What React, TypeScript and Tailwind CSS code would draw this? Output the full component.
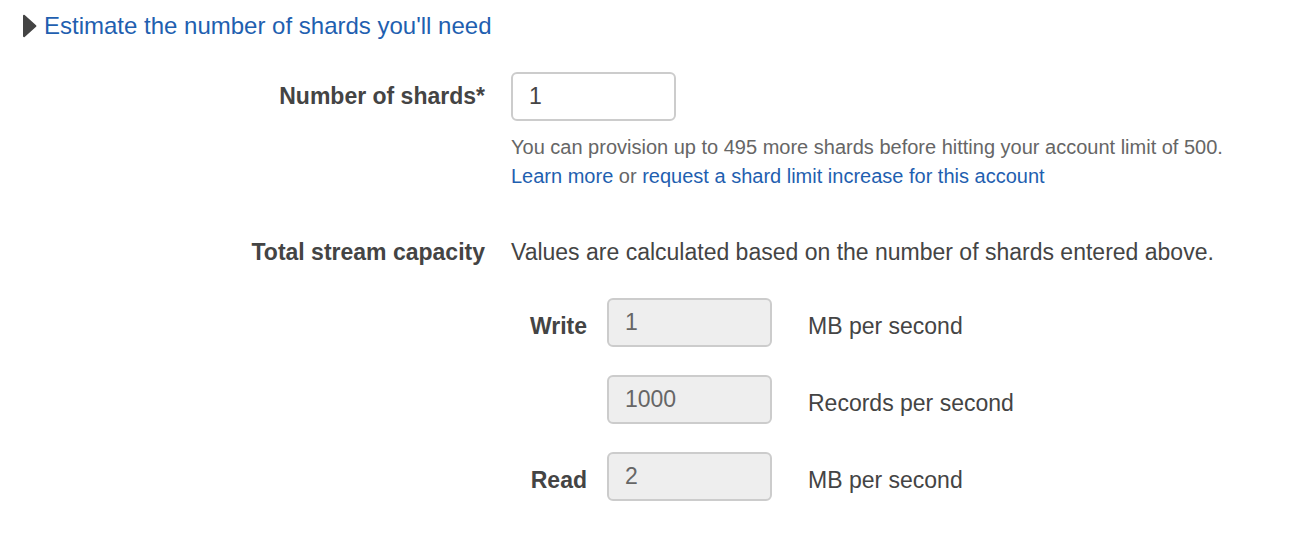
import React, { useState } from "react";

type CapacityRow = { id: string; heading?: string; value: number; unit: string };

const link = "text-[#1f5fb0] hover:underline";
const label = "font-bold leading-7 text-[#444444]";
const field = "block h-[49px] w-[165px] rounded-md border-2 border-[#cccccc] px-4 pb-px";

function Capacity({ id, heading, value, unit }: CapacityRow) {
  return (
    <div className="flex items-center">
      <div className="w-[76px] shrink-0 pt-1.5 text-right">
        {heading && (
          <label htmlFor={id} className={label}>
            {heading}
          </label>
        )}
      </div>
      <input
        id={id}
        readOnly
        value={value}
        aria-describedby={`${id}-unit`}
        aria-label={heading ? undefined : unit}
        className={`ml-5 bg-[#eeeeee] text-[#666666] ${field}`}
      />
      <span id={`${id}-unit`} className="ml-9 pt-1.5">
        {unit}
      </span>
    </div>
  );
}

export default function App() {
  const [shards, setShards] = useState("1");
  const count = Math.max(0, Number(shards) || 0);
  return (
    <main className="bg-white pt-3 pb-10 font-['Liberation_Sans',Arial,sans-serif] text-[23px] leading-7 text-[#444444]">
      <a href="#estimate" className={`flex items-center gap-[7px] pl-[23px] text-[24px] ${link}`}>
        <svg width="14" height="24" viewBox="0 0 14 24" fill="#444444" stroke="#444444" strokeWidth="2" strokeLinejoin="round" aria-hidden="true">
          <path d="M1 1.8 12.4 12 1 22.2Z" />
        </svg>
        Estimate the number of shards you'll need
      </a>

      <div className="mt-8 grid grid-cols-[485px_1fr] gap-x-[26px]">
        <label htmlFor="shards" className={`pt-[10px] text-right ${label}`}>
          Number of shards*
        </label>
        <div>
          <input
            id="shards"
            value={shards}
            onChange={(e) => setShards(e.target.value)}
            className={`bg-white ${field}`}
          />
          <p className="mt-3 text-[20px] leading-[29px] text-[#666666]">
            You can provision up to 495 more shards before hitting your account limit of 500.
            <br />
            <a href="#learn" className={link}>Learn more</a> or{" "}
            <a href="#limit" className={link}>request a shard limit increase for this account</a>
          </p>
        </div>
      </div>

      <div className="mt-[47px] grid grid-cols-[485px_1fr] gap-x-[26px]">
        <h2 className={`text-right ${label}`}>Total stream capacity</h2>
        <div>
          <p>Values are calculated based on the number of shards entered above.</p>
          <div className="mt-8 flex flex-col gap-7">
            <Capacity id="write-mb" heading="Write" value={count} unit="MB per second" />
            <Capacity id="write-records" value={count * 1000} unit="Records per second" />
            <Capacity id="read-mb" heading="Read" value={count * 2} unit="MB per second" />
          </div>
        </div>
      </div>
    </main>
  );
}
